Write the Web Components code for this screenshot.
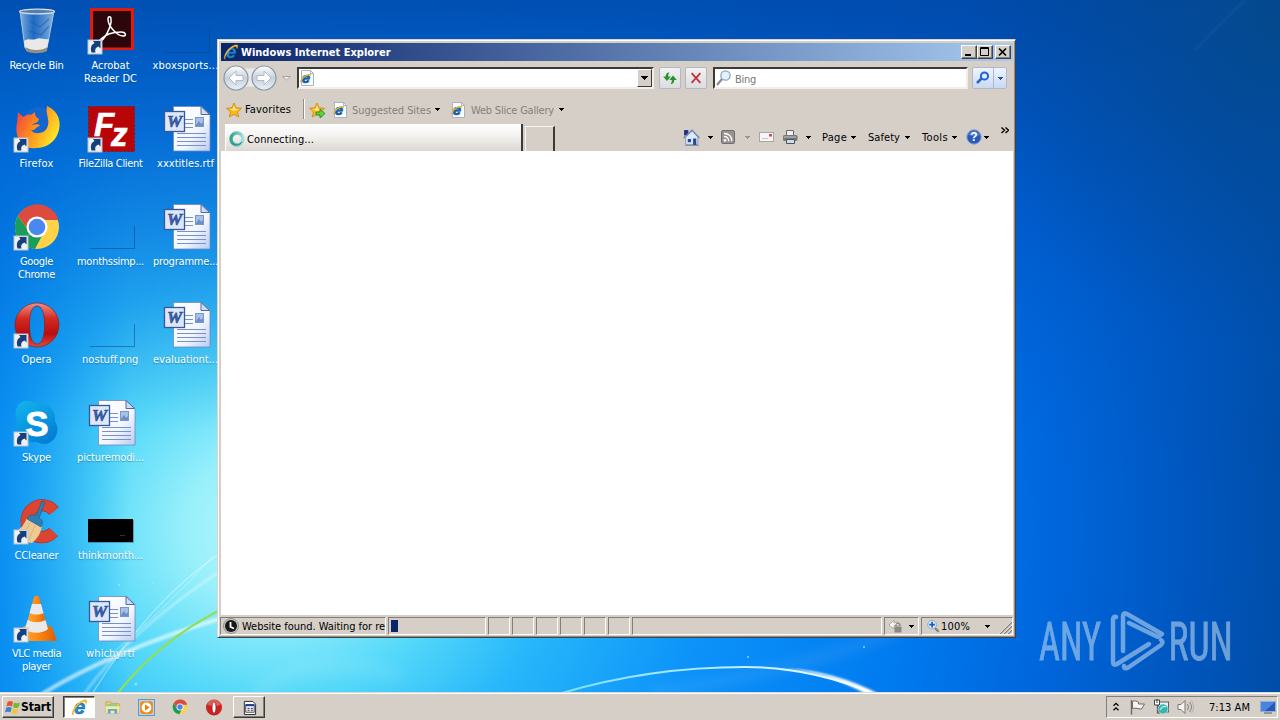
<!DOCTYPE html>
<html lang="en">
<head>
<meta charset="utf-8">
<title>Desktop</title>
<style>
  html, body { margin: 0; height: 100%; overflow: hidden; }
  body {
    font: 11px/13px "DejaVu Sans Condensed", "DejaVu Sans", "Liberation Sans", sans-serif;
    font-stretch: condensed;
    --face: #d5cfc8;
    --shade: #827e79;
    --dark: #3c3a38;
  }
</style>
</head>
<body>
<desk-top></desk-top>

<script>
const ARROW = `<rect x="2" y="33" width="14" height="14" fill="#eef1f5" stroke="#b9c2cc"/>
  <path d="M5.500 45.500c-1.500-5 0-8 3-9.500l-1.500-2 7.500 0v7.500l-2-2c-3 1-4 3-3 6z" fill="#173f7c"/>`;

const E_LOGO = `<text x="8" y="14" text-anchor="middle" font-family="Liberation Sans" font-weight="bold" font-style="italic" font-size="19" fill="#1f8fd8" stroke="#12569f" stroke-width=".5">e</text>
  <path d="M2 15.500C-1 13 5 3 12 1c4-1 3 2 2 4c0-2-1-3-3-2C6 5 2 11 2 15.500z" fill="#f5c52d" stroke="#d09a10" stroke-width=".3"/>`;

const PAGE_E = `<path d="M2.500 .5h9l3 3v12h-12z" fill="#fff" stroke="#a9b2bf"/><path d="M11.500 .5v3h3" fill="none" stroke="#a9b2bf"/>
  <text x="6.800" y="12.500" text-anchor="middle" font-family="Liberation Sans" font-weight="bold" font-style="italic" font-size="15" fill="#1668b8" stroke="#12509a" stroke-width=".7">e</text>
  <path d="M1.500 13C0 10 5 4 11 4c2 0 1 1 1 2C8 4 3 9 1.500 13z" fill="#d9bb35"/>`;

const CHROME = `<circle cx="24" cy="24" r="22" fill="#ffd24a"/>
  <path d="M5 13A22 22 0 0 1 45.500 17H24l-8 11z" fill="#dd4b3e"/>
  <path d="M5 13A22 22 0 0 0 22 46l9.500-18-7 6-8-5z" fill="#1a9d58"/>
  <circle cx="24" cy="24" r="10.500" fill="#fff"/><circle cx="24" cy="24" r="8.300" fill="#4a87f0"/>`;

const OPERA = `<defs><linearGradient id="o" x2="0" y2="1"><stop offset="0" stop-color="#f09086"/><stop offset=".35" stop-color="#d42a22"/><stop offset=".7" stop-color="#b80d0d"/><stop offset="1" stop-color="#e14a3c"/></linearGradient></defs>
  <path fill-rule="evenodd" fill="url(#o)" stroke="#8d1512" stroke-width=".6" d="M25 2a22 22 0 0 1 0 44a22 22 0 0 1 0-44zM25 5c-5 0-7.500 7-7.500 19S20 43 25 43s7.500-7 7.500-19S30 5 25 5z"/>`;

const STAR = `<path d="M8 1l2.200 4.800 5.300.5-4 3.600 1.300 5.100L8 12.300 3.200 15l1.300-5.100-4-3.600 5.300-.5z" fill="#f9b91f" stroke="#d48208" stroke-width=".8"/><path d="M8 3l1.300 4 3.700.2-5 1.800-4-1.800 2.700-.2z" fill="#ffe985"/>`;

// every entry is [viewBox, markup]
const ICONS = {
  bin: ["0 0 49 48", `<defs><linearGradient id="g"><stop offset="0" stop-color="#9fc3e4" stop-opacity=".85"/><stop offset=".4" stop-color="#3f83cc" stop-opacity=".5"/><stop offset="1" stop-color="#a6c8e6" stop-opacity=".85"/></linearGradient></defs>
    <path d="M8 4l5 37c5 4 18 4 22 0l7-37z" fill="url(#g)" stroke="#a9c5df"/>
    <path d="M12 34c5-4 8 0 12-2s8 1 13 0l-2 9c-5 4-17 4-22 0z" fill="#e9eae8"/>
    <ellipse cx="25" cy="4.500" rx="17.500" ry="2.300" fill="#547fae" stroke="#d5dce2" stroke-width="1.300"/>
    <path d="M13.500 40c5 4 17 4 22 0l-.5 4c-5 3-16 3-21 0z" fill="#938e84"/><path d="M18 14l10 6 9-8M17 24l12 4 8-9" stroke="#255faa" stroke-width="1.400" opacity=".6" fill="none"/>`],
  acrobat: ["0 0 49 48", `<rect x="4" y="1" width="44" height="42" fill="#e4190f"/><rect x="7" y="4" width="38" height="36.500" fill="#2b070b"/>
    <path d="M14 34c4 0 12-15 11-22c0-3-3-3-3 0c0 8 10 17 15 17c4 0 3-4-2-4c-8 0-16 3-20 7c-2 2-2 3-1 2z" fill="none" stroke="#fff" stroke-width="1.500"/>` + ARROW],
  firefox: ["0 0 49 48", `<defs><linearGradient id="f" x1="0" x2="1" y2=".5"><stop offset="0" stop-color="#ef3550"/><stop offset=".5" stop-color="#ff8a1c"/><stop offset="1" stop-color="#ffe226"/></linearGradient></defs>
    <circle cx="27" cy="18" r="16" fill="#1565cf"/>
    <path d="M6 7l5 5c3-2 6-3 8-2l4-3c0 4 1 5 4 7c-1 4-5 4-7 6c3 0 6-2 8 1c-4 0-4 5-9 4c3 5 13 4 16-2c4-8-2-13 0-22c12 5 15 17 11 27c-3 9-12 15-22 15C10 45 2 32 5 18z" fill="url(#f)"/>` + ARROW],
  filezilla: ["0 0 49 48", `<rect x="2.500" y="1.500" width="46" height="45" fill="#b70508" stroke="#8a1118" stroke-dasharray="2 2"/>
    <text x="8 25" y="31 41" font-family="Liberation Sans" font-weight="bold" font-style="italic" font-size="33" fill="#fff" stroke="#fff" stroke-width=".6">Fz</text>` + ARROW],
  chrome: ["0 0 49 48", `<g transform="translate(1 0)">${CHROME}</g>` + ARROW],
  opera: ["0 0 49 48", OPERA + ARROW],
  skype: ["0 0 49 48", `<defs><linearGradient id="s" x2=".6" y2="1"><stop offset="0" stop-color="#13b5ef"/><stop offset="1" stop-color="#0380d5"/></linearGradient></defs>
    <path d="M5 8C9 0 19 1 23 4c12-2 22 8 20 18c6 10 0 22-10 23c-4 0-6-1-8-2C13 45 3 35 5 22C3 17 3 12 5 8z" fill="url(#s)"/>
    <text x="25" y="36.500" text-anchor="middle" font-family="Liberation Sans" font-weight="bold" font-size="35" fill="#fff" stroke="#fff" stroke-width=".8">S</text>` + ARROW],
  ccleaner: ["0 0 49 48", `<path d="M42 14A15.500 16 0 1 0 41.500 35" fill="none" stroke="#a92d22" stroke-width="12"/><path d="M42 14A15.500 16 0 1 0 41.500 35" fill="none" stroke="#da4430" stroke-width="11"/>
    <path d="M15 21l15 8c-1 7-5 13-10 17C12 45 4 40 2 35c6-2 10-7 13-14z" fill="#efc993"/><path d="M18 26l-7 13M23 28l-6 15" stroke="#dcb27a"/>
    <path d="M30 4l3 1-6 16c4 2 4 5 2 9l-14-8c2-4 5-5 9-3z" fill="#2d7eb4" stroke="#24587e" stroke-width=".6"/>` + ARROW],
  vlc: ["0 0 49 48", `<defs><linearGradient id="v"><stop offset="0" stop-color="#ffad45"/><stop offset=".5" stop-color="#ff8b12"/><stop offset="1" stop-color="#db5c05"/></linearGradient></defs>
    <path d="M11 32l4-2h20l5 2 5 14H5z" fill="url(#v)"/><path d="M22 2q2.500-2.500 5 0l9 33c-5 5-18 5-23 0z" fill="url(#v)"/>
    <path d="M20 9h9l2.500 9c-4 2-10 2-14 0zM15.500 25c6 3 12 3 18 0l2.500 9c-5 5-18 5-23 0z" fill="#e9e9ea"/>` + ARROW],
  word: ["0 0 49 48", `<defs><linearGradient id="p" x2="1" y2="1"><stop offset="0" stop-color="#fff"/><stop offset=".6" stop-color="#f2f6ff"/><stop offset="1" stop-color="#b9cbf0"/></linearGradient></defs>
    <path d="M12.500 1.500h28l8.500 8v36.500H12.500z" fill="url(#p)" stroke="#7089bd" stroke-width=".8"/><path d="M40 1.500v8h8.500z" fill="#cfdcf5" stroke="#50699f"/>
    <path d="M24 14.500h8M24 18.500h8M24 22.500h8M16 28.500h29M16 32.500h29M16 36.500h29M16 40.500h29" stroke="#7991c4" stroke-width="1"/>
    <rect x="34.500" y="12.500" width="8" height="9" fill="#a8bfe6" stroke="#7a96cc"/><path d="M35 20l3-4 2 3 2-2v4h-7z" fill="#6c8dc9"/>
    <rect x="3.500" y="6.500" width="20" height="20" fill="#dde7f8" stroke="#38589b" stroke-width="1.300"/>
    <text x="13.500" y="22" text-anchor="middle" font-family="Liberation Serif" font-weight="bold" font-style="italic" font-size="17" fill="#3f60aa" stroke="#274a94" stroke-width=".6">W</text>`],
  thumb: ["0 0 49 48", `<path d="M4 45.500h44.500V23" fill="none" stroke="#053f86" stroke-opacity=".5"/>`],
  black: ["0 0 49 48", `<rect x="2" y="22" width="45" height="23" fill="#000"/><path d="M2 45.500h45.500V23" fill="none" stroke="#246" opacity=".4"/><path d="M34 38.500h5" stroke="#243f1c"/>`],

  ie: ["0 0 16 16", E_LOGO],
  page: ["0 0 16 16", PAGE_E],
  star: ["0 0 16 16", STAR],
  staradd: ["0 0 16 16", STAR + `<path d="M7 10h4V7l5 4.500-5 4.500v-3H7z" fill="#5fd046" stroke="#198a18" stroke-width=".8"/>`],
  refresh: ["0 0 16 16", `<path d="M7.500 2.500C4.500 2.500 3.800 4.500 3.800 6.500H1.200l3.800 4.500L8.800 6.500H6.200c0-2 .3-3 1.300-4zM8.500 14c3 0 3.700-2 3.700-4h2.600L11 5.500 7.200 10h2.600c0 2-.3 3-1.300 4z" fill="#23962c"/>`],
  stop: ["0 0 16 16", `<path d="M3 2.500l10 11M13 2.500L3 13.500" stroke="#c22f38" stroke-width="2"/>`],
  lens: ["0 0 16 16", `<path d="M1 15l5-6" stroke="#8c8c90" stroke-width="2.200"/><circle cx="9.500" cy="5.500" r="4.700" fill="#e3f1fa" stroke="#8fa3b7" stroke-width="1.200"/>`],
  lensblue: ["0 0 16 16", `<path d="M2 13l5-5" stroke="#2c67c4" stroke-width="2.500"/><circle cx="9.500" cy="6" r="3.600" fill="#dcecff" stroke="#2463d0" stroke-width="2"/>`],
  home: ["0 0 16 16", `<path d="M1 1h4v5H1z" fill="#262e8c"/><path d="M2.500 7.500L8.500 2l5.500 5.500v7H2.500z" fill="#dbe8fa" stroke="#8390bd" stroke-width=".8"/><path d="M.5 8.500l8-7.500 7 7.500" fill="none" stroke="#7883ad" stroke-width="1.200"/><path d="M9.500 9h3v6h-3zM4.500 9.500h3v3h-3z" fill="#294799"/><path d="M2 15.500h13" stroke="#8d93a4"/>`],
  rss: ["0 0 16 16", `<rect x="1.500" y="1.500" width="13" height="13" rx="1.500" fill="#969492" stroke="#706e6c"/><circle cx="5" cy="11.300" r="1.400" fill="#fff"/><path d="M4 7.500c3 0 4.700 1.700 4.700 4.800M4 4.500c5 0 7.800 2.800 7.800 7.800" fill="none" stroke="#fff" stroke-width="1.300"/>`],
  mail: ["0 0 16 16", `<rect x="1.500" y="3.500" width="14" height="9" fill="#f7f5f5" stroke="#aaa5a4"/><rect x="11" y="5" width="3" height="2.500" fill="#d94a48"/><path d="M4 9.500h6" stroke="#c9c4c4"/>`],
  print: ["0 0 16 16", `<path d="M4.500 1.500h7v5h-7z" fill="#eee" stroke="#6b6b6b"/><rect x="1" y="6" width="14.500" height="6" rx="1.500" fill="#77787b"/><path d="M2 8h12" stroke="#c6c7c9"/><path d="M4.500 10.500h8v4h-8z" fill="#bfe0f2" stroke="#555"/>`],
  help: ["0 0 16 16", `<circle cx="8" cy="8" r="7.200" fill="#2b59b8" stroke="#8ba4d4"/><path d="M2 6a6.500 6 0 0 1 12 0q-6 2-12 0z" fill="#6d94df" opacity=".6"/><text x="8" y="12.300" text-anchor="middle" font-family="Liberation Sans" font-size="12" font-weight="bold" fill="#fff">?</text>`],
  ring: ["0 0 16 16", `<defs><linearGradient id="r"><stop offset="0" stop-color="#35a58f"/><stop offset="1" stop-color="#a6dfe2"/></linearGradient></defs><circle cx="8" cy="8" r="6" fill="none" stroke="url(#r)" stroke-width="3.400"/><path d="M3 12a6.500 6.500 0 0 0 10-1" stroke="#1f8b86" stroke-width="1" fill="none"/>`],
  clock: ["0 0 16 16", `<circle cx="8" cy="8" r="7.600" fill="#c4c1bd" stroke="#8c8986" stroke-width=".8"/><circle cx="8" cy="8" r="6" fill="#16181a"/><path d="M7.500 4v5l3.500 1.500" stroke="#fff" stroke-width="1.800" fill="none"/>`],
  lock: ["0 0 16 16", `<path d="M1 7l5-5v3c3-2 5 0 5 2l-3 1c-1-1-2-1-2 0v3z" fill="#f7f7f7" stroke="#98938e" stroke-width=".7"/><rect x="6.500" y="8.500" width="7" height="6" fill="#8b8884"/><path d="M8 8V6.500q2-3 4 0V8" fill="none" stroke="#8b8884" stroke-width="1.300"/>`],
  zoom: ["0 0 16 16", `<path d="M9.500 9.500l4 4" stroke="#8b7b66" stroke-width="2.200"/><circle cx="6.500" cy="6" r="4.600" fill="#dceefa" stroke="#7fa7cc"/><path d="M6.500 3v6M3.500 6h6" stroke="#1d58c0" stroke-width="1.800"/>`],
  flagwin: ["0 0 16 16", `<path d="M2.500 3q3-2 5.500 0L7 7.500Q4 6 1.500 7.500z" fill="#e8552c"/><path d="M9 3.500q3 1.500 6 0l-1.300 4.800q-3 1.500-5.700 0z" fill="#73b938"/><path d="M1.200 8.800q3-1.500 5.500 0L5.500 13.300Q3 12 0 13.300z" fill="#3b82d2"/><path d="M7.700 9.500q3 1.500 5.700 0L12 14q-3 1.500-5.500 0z" fill="#f7c52c"/>`],
  folder: ["0 0 18 16", `<path d="M2 2.500h5l1 2h8v9H2z" fill="#f2d77b" stroke="#b99a48" stroke-width=".8"/><path d="M3 4.500h11v3H3z" fill="#8fd08a"/><path d="M1 7h16l-1 8H2z" fill="#fbe9a6" stroke="#d3b868" stroke-width=".6"/><path d="M4 15v-5h10v5h-3v-3H7v3z" fill="#5aa9da"/>`],
  media: ["0 0 16 16", `<rect x=".5" y=".5" width="15" height="15" fill="#b9daef" stroke="#5a9bc8"/><rect x="2" y="2" width="12" height="12" rx="2" fill="#f38b16"/><circle cx="8" cy="8" r="4.600" fill="#fff"/><path d="M6.500 5l4.500 3-4.500 3z" fill="#ee7f10"/>`],
  chromesm: ["0 0 48 48", CHROME],
  operasm: ["0 0 50 48", `<circle cx="25" cy="24" r="22" fill="#cf211f" stroke="#8f1a18"/><path d="M6 16a20 20 0 0 1 38 0q-18 7-38 0z" fill="#e9766d" opacity=".7"/><ellipse cx="25" cy="24" rx="5.500" ry="16" fill="#fff" stroke="#8f1a18" stroke-width="2"/>`],
  doc: ["0 0 16 16", `<path d="M2.500 1.500h9l3 3v11h-12z" fill="#fff" stroke="#222"/><rect x="4" y="5" width="9" height="8" fill="#e5e8f4" stroke="#223" stroke-width=".8"/><path d="M4 5.500h9" stroke="#163a9c" stroke-width="2"/><path d="M6 9h2M9.500 9h2M6 11h2M9.500 11h2" stroke="#333"/>`],
  flag: ["0 0 16 16", `<path d="M2.500 1v14.500" stroke="#6c6967" stroke-width="1.400"/><path d="M3.500 2.500c3-1.500 4 0 6 .5v2h6l-3 5c-4 0-5-1.500-9-.5z" fill="#f5f4f2" stroke="#6c6967"/>`],
  net: ["0 0 16 16", `<path d="M4.500 5v9H7" stroke="#555" stroke-width="1.200" fill="none"/><rect x="5.500" y="3" width="10" height="10" fill="#f1f1f1" stroke="#5b6167"/><path d="M1.500 1h5v5h-5z" fill="#fff" stroke="#444"/><path d="M4 0v4" stroke="#444"/><circle cx="10" cy="10" r="5" fill="#37b5ad" stroke="#cdeeea" stroke-width=".6"/><path d="M7 11q3-5 6-3" stroke="#c0f0e5" fill="none" stroke-width="1.300"/>`],
  sound: ["0 0 17 16", `<path d="M1 5.500h3l4-4v13l-4-4H1z" fill="#f7f6f5" stroke="#777"/><path d="M10.500 5q2 3 0 6M12.500 3q4 5 0 10" fill="none" stroke="#84817f"/><path d="M14.500 1.500q4 6.500 0 13" fill="none" stroke="#b4b0ad"/>`],
  screen: ["0 0 16 16", `<rect x=".5" y="2.500" width="15" height="10" fill="#2558b8" stroke="#8faed8"/><path d="M1 3h14L5 12H1z" fill="#4b84dd"/><path d="M4 14h8" stroke="#555b66"/>`],
};

class UiIcon extends HTMLElement {
  constructor() {
    super();
    this.attachShadow({ mode: "open" });
  }

  connectedCallback() {
    const [box, body] = ICONS[this.getAttribute("name")];
    const w = this.getAttribute("w") || 16;
    const h = this.getAttribute("h") || w;
    this.shadowRoot.innerHTML = `
      <style>:host { display: block; flex: none; text-shadow: none; } svg { display: block; overflow: visible; }</style>
      <svg viewBox="${box}" width="${w}" height="${h}">${body}</svg>`;
  }
}
customElements.define("ui-icon", UiIcon);

// One line of text, tracked so that it fills the width in "w"
class UiText extends HTMLElement {
  constructor() {
    super();
    this.attachShadow({ mode: "open" });
    this.shadowRoot.innerHTML = `
      <style>:host { display: block; flex: none; white-space: nowrap; } span { display: inline-block; }</style>
      <span><slot></slot></span>`;
  }

  connectedCallback() {
    const w = Number(this.getAttribute("w"));
    if (!w) return;
    const span = this.shadowRoot.querySelector("span");
    const gap = (w - span.getBoundingClientRect().width) / this.textContent.length;
    span.style.letterSpacing = gap + "px";
    this.style.width = w + "px";
  }
}
customElements.define("ui-text", UiText);

class DropArrow extends HTMLElement {
  constructor() {
    super();
    this.attachShadow({ mode: "open" });
    this.shadowRoot.innerHTML = `
      <style>
        :host { display: block; flex: none; width: 5px; height: 3px; color: #000; }
        svg { display: block; }
      </style>
      <svg width="5" height="3" shape-rendering="crispEdges"><path d="M0 0h5v1h-5zM1 1h3v1h-3zM2 2h1v1h-1z" fill="currentColor"/></svg>`;
  }
}
customElements.define("drop-arrow", DropArrow);

class DesktopIcon extends HTMLElement {
  constructor() {
    super();
    this.attachShadow({ mode: "open" });
  }

  connectedCallback() {
    // label="text:width|text:width"
    const lines = this.getAttribute("label").split("|").map((line) => {
      const [text, w] = line.split(":");
      return `<ui-text w="${w}">${text}</ui-text>`;
    });
    this.shadowRoot.innerHTML = `
      <style>
        :host { display: flex; flex-direction: column; align-items: center; height: 98px; color: #fff; text-shadow: 0 1px 1px #04589088; }
        .label { display: flex; flex-direction: column; align-items: center; margin-top: 4px; }
      </style>
      <ui-icon name="${this.getAttribute("icon")}" w="49" h="48"></ui-icon>
      <div class="label">${lines.join("")}</div>`;
  }
}
customElements.define("desktop-icon", DesktopIcon);

class WallPaper extends HTMLElement {
  constructor() {
    super();
    this.attachShadow({ mode: "open" });
    this.shadowRoot.innerHTML = `
      <style>:host { display: block; } svg { display: block; }</style>
      <svg width="1280" height="720">
        <defs>
          <radialGradient id="glow" gradientUnits="userSpaceOnUse" cx="0" cy="0" r="1060" gradientTransform="translate(270 530) scale(1 .92)">
            <stop offset="0" stop-color="#b9f6fb"/><stop offset=".08" stop-color="#98f0fb"/><stop offset=".17" stop-color="#56d9f9"/>
            <stop offset=".27" stop-color="#27b7fa"/><stop offset=".42" stop-color="#0c92f9"/><stop offset=".6" stop-color="#007bf0"/>
            <stop offset=".74" stop-color="#0066dc"/><stop offset=".88" stop-color="#0055bc"/><stop offset="1" stop-color="#004a9f"/>
          </radialGradient>
          <linearGradient id="top" x2="0" y2="1"><stop offset="0" stop-color="#0049aa" stop-opacity=".88"/><stop offset=".22" stop-color="#0050bb" stop-opacity=".5"/><stop offset=".6" stop-color="#0060d0" stop-opacity="0"/></linearGradient>
          <linearGradient id="left"><stop offset="0" stop-color="#0080ee" stop-opacity=".75"/><stop offset="1" stop-color="#0090f0" stop-opacity="0"/></linearGradient>
          <linearGradient id="arc"><stop offset="0" stop-color="#7fe0ff"/><stop offset=".5" stop-color="#b8ecff"/><stop offset="1" stop-color="#fff"/></linearGradient>
          <radialGradient id="corner" gradientUnits="userSpaceOnUse" cx="1290" cy="20" r="330"><stop offset="0" stop-color="#064980" stop-opacity=".7"/><stop offset="1" stop-color="#064a90" stop-opacity="0"/></radialGradient>
          <filter id="soft"><feGaussianBlur stdDeviation="1.300"/></filter>
          <filter id="haze" filterUnits="userSpaceOnUse" x="0" y="0" width="1280" height="720"><feGaussianBlur stdDeviation="6"/></filter>
        </defs>
        <rect width="1280" height="720" fill="url(#glow)"/>
        <rect width="130" height="720" fill="url(#left)"/>
        <rect width="1280" height="720" fill="url(#top)"/>
        <rect x="950" width="330" height="360" fill="url(#corner)"/>
        <g fill="none" stroke="#fff">
          <path d="M42 694Q110 652 222 618" stroke-width="4" opacity=".6" filter="url(#soft)"/>
          <path d="M84 694Q130 630 222 570" stroke-width="2.500" opacity=".4" filter="url(#soft)"/>
          <path d="M92 694Q150 600 222 552" stroke-width="1.500" opacity=".35"/>
          <path d="M104 660Q165 610 213 556" stroke-width="1" opacity=".35"/>
          <path d="M117 694Q160 640 222 609" stroke="#8fe058" stroke-width="2.300"/>
          <path d="M255 694Q300 650 400 675" stroke-width="16" opacity=".07" filter="url(#haze)"/>
          <path d="M650 694Q800 670 900 630" stroke-width="9" opacity=".09" filter="url(#haze)"/>
          <path d="M1195 50L1245 0" stroke-width="2" opacity=".05" filter="url(#soft)"/>
        </g>
        <path d="M790 669Q834 671 879 694h-13Q825 671 780 669z" fill="#fff" filter="url(#soft)"/>
        <path d="M562 693Q650 667 745 667Q810 667 872 693" fill="none" stroke="url(#arc)" stroke-width="2"/>
        <g fill="#9eeaff" opacity=".8"><circle cx="119" cy="585" r="1"/><circle cx="153" cy="583" r="1"/><circle cx="136" cy="684" r="1.500"/><circle cx="748" cy="657" r="1"/><circle cx="864" cy="647" r="1"/></g>
      </svg>`;
  }
}
customElements.define("wall-paper", WallPaper);

class WaterMark extends HTMLElement {
  constructor() {
    super();
    this.attachShadow({ mode: "open" });
    this.shadowRoot.innerHTML = `
      <style>:host { display: block; } svg { display: block; }</style>
      <svg width="196" height="66" opacity=".62">
        <g fill="#b0d0ee" stroke="#b0d0ee" stroke-width=".8" font-family="Roboto" font-size="53" font-weight="400">
          <text transform="translate(1 52) scale(.62 1)" textLength="100" lengthAdjust="spacingAndGlyphs">ANY</text>
          <text transform="translate(130.500 52) scale(.6 1)" textLength="107" lengthAdjust="spacingAndGlyphs">RUN</text>
        </g>
        <g fill="none" stroke="#b0d0ee" stroke-width="4.500" stroke-linejoin="round" stroke-linecap="round">
          <path d="M78 9Q75 8 75 12V54Q75 58 79 56L111 36"/>
          <path d="M85 43V8Q85 4 89 6L124 26L120 29L91 15"/>
          <path d="M123 32Q126 34 123 37L91 59Q86 62 86 58"/>
        </g>
      </svg>`;
  }
}
customElements.define("water-mark", WaterMark);

class TitleBar extends HTMLElement {
  constructor() {
    super();
    this.attachShadow({ mode: "open" });
    this.shadowRoot.innerHTML = `
      <style>
        :host { display: flex; align-items: center; height: 18px; padding: 0 2px 0 2px; background: linear-gradient(90deg, #0a246a, #a6caf0); color: #fff; font-weight: bold; }
        ui-text { margin: 0 auto 0 2px; }
        .btn { box-sizing: border-box; width: 16px; height: 14px; background: var(--face); border: 1px solid; border-color: #fff #45423f #45423f #fff; box-shadow: inset -1px -1px var(--shade); }
        .btn:last-child { margin-left: 2px; }
        svg { display: block; }
      </style>
      <ui-icon name="ie"></ui-icon>
      <ui-text w="152"><slot></slot></ui-text>
      <div class="btn"><svg width="13" height="12"><path d="M3 9h6" stroke="#000" stroke-width="2"/></svg></div>
      <div class="btn"><svg width="13" height="12"><path d="M2.500 1.500h8v8h-8zM2 2.500h9" fill="none" stroke="#000"/></svg></div>
      <div class="btn"><svg width="13" height="12"><path d="M3 2.500l7 7M10 2.500l-7 7" stroke="#000" stroke-width="1.700"/></svg></div>`;
  }
}
customElements.define("title-bar", TitleBar);

class NavBar extends HTMLElement {
  constructor() {
    super();
    this.attachShadow({ mode: "open" });
    this.shadowRoot.innerHTML = `
      <style>
        :host { display: flex; align-items: center; height: 34px; padding-left: 3px; box-sizing: border-box; }
        .nav { display: block; flex: none; margin-right: 3px; }
        .field { box-sizing: border-box; display: flex; align-items: center; height: 22px; background: #fff; border: 2px solid; border-color: var(--dark) #f1eeea #f1eeea var(--dark); }
        .url { width: 357px; margin-left: 6px; }
        .url .drop { margin-left: auto; display: flex; align-items: center; justify-content: center; width: 15px; height: 18px; box-sizing: border-box; background: var(--face); border: 1px solid; border-color: #fff var(--dark) var(--dark) #fff; }
        .sq { box-sizing: border-box; display: flex; align-items: center; justify-content: center; width: 22px; height: 22px; border: 1px solid #b3b9c4; border-radius: 2px; background: linear-gradient(#f1f1f2, #dddde0); }
        .search { width: 255px; margin-left: 6px; padding-left: 1px; color: #777; }
        .search ui-text { margin: 2px 0 0 3px; }
        .go { width: 35px; margin-left: 4px; justify-content: flex-start; padding-left: 2px; background: linear-gradient(#eef4fd, #c9d9f2); }
        .go i { width: 1px; height: 20px; background: #aab9d2; margin: 0 4px 0 2px; }
        .sm { color: #2c4f9c; }
      </style>
      <svg class="nav" width="56" height="28">
        <defs><linearGradient id="b" x2="0" y2="1"><stop offset="0" stop-color="#fff"/><stop offset=".5" stop-color="#c6d0dc"/><stop offset="1" stop-color="#e8f3fb"/></linearGradient></defs>
        <path d="M12 2Q27 7 42 2V25Q27 20 12 25z" fill="#ebe9e7"/>
        <g fill="url(#b)" stroke="#8d98a6" stroke-width="1.200"><circle cx="13" cy="14" r="12"/><circle cx="41" cy="14" r="12"/></g>
        <path d="M13 7L6 14l7 7v-4.500h7v-5h-7zM41 7l7 7-7 7v-4.500h-7v-5h7z" fill="#fff" stroke="#b0bac6"/>
      </svg>
      <svg width="9" height="5"><path d="M.5 .5h8L4.500 4z" fill="#eee" stroke="#aaa59f"/></svg>
      <div class="field url"><ui-icon name="page"></ui-icon><div class="drop"><svg width="7" height="4" shape-rendering="crispEdges"><path d="M0 0h7v1h-7zM1 1h5v1h-5zM2 2h3v1h-3zM3 3h1v1h-1z"/></svg></div></div>
      <div class="sq" style="margin-left:5px"><ui-icon name="refresh"></ui-icon></div>
      <div class="sq" style="margin-left:4px"><ui-icon name="stop" w="14"></ui-icon></div>
      <div class="field search"><ui-icon name="lens"></ui-icon><ui-text w="21">Bing</ui-text></div>
      <div class="sq go"><ui-icon name="lensblue"></ui-icon><i></i><drop-arrow class="sm"></drop-arrow></div>`;
  }
}
customElements.define("nav-bar", NavBar);

class FavoritesBar extends HTMLElement {
  constructor() {
    super();
    this.attachShadow({ mode: "open" });
    this.shadowRoot.innerHTML = `
      <style>
        :host { display: flex; align-items: center; box-sizing: border-box; height: 27px; padding: 2px 0 0 6px; color: #85817d; }
        .first { color: #000; margin-left: 3px; }
        i { width: 1px; height: 20px; margin: -2px 4px 0 12px; background: #918d88; border-right: 1px solid #fff; }
        .link { margin: 1px 4px 0 4px; }
        .gap { margin-right: 10px; }
      </style>
      <ui-icon name="star"></ui-icon><ui-text class="first" w="46">Favorites</ui-text><i></i>
      <ui-icon name="staradd" style="margin-right:7px"></ui-icon>
      <ui-icon name="page"></ui-icon><ui-text class="link" w="79">Suggested Sites</ui-text><drop-arrow class="gap"></drop-arrow>
      <ui-icon name="page"></ui-icon><ui-text class="link" w="83" style="margin:1px 5px 0">Web Slice Gallery</ui-text><drop-arrow></drop-arrow>`;
  }
}
customElements.define("favorites-bar", FavoritesBar);

class CommandBar extends HTMLElement {
  constructor() {
    super();
    this.attachShadow({ mode: "open" });
    this.shadowRoot.innerHTML = `
      <style>
        :host { display: flex; align-items: flex-end; height: 29px; padding-left: 5px; }
        .tab { box-sizing: border-box; display: flex; align-items: center; width: 298px; height: 27px; padding: 3px 0 0 3px; border-right: 2px solid var(--dark); border-left: 1px solid #fff; background: linear-gradient(#fff, #f5f4f2 40%, #dcd7d1); }
        .tab ui-text { margin-left: 2px; }
        .new { box-sizing: border-box; width: 30px; height: 25px; margin-left: 2px; border: 1px solid #f7f5f3; border-bottom: 0; border-right: 2px solid var(--dark); }
        .tools { display: flex; align-items: center; height: 27px; margin-left: 128px; padding-bottom: 1px; box-sizing: border-box; }
        .tools drop-arrow { margin: 0 7px 0 3px; }
        .tools ui-text + drop-arrow { margin: 0 12px 0 3px; }
        .more { display: block; margin: 0 0 17px auto; padding-right: 4px; }
      </style>
      <div class="tab"><ui-icon name="ring"></ui-icon><ui-text w="67">Connecting...</ui-text></div>
      <div class="new"></div>
      <div class="tools">
        <ui-icon name="home" w="17"></ui-icon><drop-arrow style="margin-left:8px"></drop-arrow>
        <ui-icon name="rss"></ui-icon><drop-arrow style="margin:0 11px 0 9px;color:#98938e"></drop-arrow>
        <ui-icon name="mail" style="margin-left:-3px"></ui-icon><ui-icon name="print" style="margin:0 7px 0 8px"></ui-icon><drop-arrow style="margin:0 11px 0 1px"></drop-arrow>
        <ui-text w="25">Page</ui-text><drop-arrow style="margin-left:4px"></drop-arrow>
        <ui-text w="32">Safety</ui-text><drop-arrow style="margin-left:5px"></drop-arrow>
        <ui-text w="26">Tools</ui-text><drop-arrow style="margin-right:9px;margin-left:4px"></drop-arrow>
        <ui-icon name="help"></ui-icon><drop-arrow style="margin-left:2px"></drop-arrow>
      </div>
      <svg class="more" width="8" height="7"><path d="M.5 .5l3 2.700-3 2.700M4.500 .5l3 2.700-3 2.700" fill="none" stroke="#000" stroke-width="1.400"/></svg>`;
  }
}
customElements.define("command-bar", CommandBar);

class StatusBar extends HTMLElement {
  constructor() {
    super();
    this.attachShadow({ mode: "open" });
    this.shadowRoot.innerHTML = `
      <style>
        :host { display: flex; gap: 2px; height: 18px; padding: 2px 0 1px; }
        div { box-sizing: border-box; display: flex; align-items: center; height: 18px; width: 22px; border: 1px solid; border-color: var(--shade) #fff #fff var(--shade); overflow: hidden; }
        b { display: block; width: 7px; height: 12px; margin-left: 2px; background: #0a246a; }
        .grip { margin-left: auto; align-self: flex-end; }
      </style>
      <div style="width:166px;padding-left:2px"><ui-icon name="clock"></ui-icon><ui-text w="143" style="margin-left:3px">Website found. Waiting for re</ui-text></div>
      <div style="width:98px"><b></b></div>
      <div></div><div></div><div></div><div></div><div></div><div></div>
      <div style="width:250px"></div>
      <div style="width:35px;padding-left:3px"><ui-icon name="lock"></ui-icon><drop-arrow style="margin-left:5px"></drop-arrow></div>
      <div style="width:92px;padding-left:4px"><ui-icon name="zoom" w="15"></ui-icon><ui-text w="29">100%</ui-text><drop-arrow style="margin-left:15px"></drop-arrow>
        <svg class="grip" width="13" height="13"><path d="M1 13L13 1M5 13l8-8M9 13l4-4" stroke="#827e79" stroke-width="1.400"/><path d="M0 13L13 0M4 13l9-9M8 13l5-5" stroke="#fff" stroke-width=".6"/></svg></div>`;
  }
}
customElements.define("status-bar", StatusBar);

class BrowserWindow extends HTMLElement {
  constructor() {
    super();
    this.attachShadow({ mode: "open" });
    this.shadowRoot.innerHTML = `
      <style>
        :host { box-sizing: border-box; display: flex; flex-direction: column; width: 799px; height: 599px; padding: 3px 1px 1px 2px; background: var(--face); border: 1px solid; border-color: #d9d5d0 #45423f #45423f #d9d5d0; box-shadow: inset 1px 1px #fff, inset -1px -1px #928d88; }
        .view { flex: 1; background: #fff; margin: 0 1px; }
        title-bar { margin: 0 1px; }
        nav-bar, favorites-bar, command-bar, status-bar { margin: 0 1px 0 0; }
      </style>
      <title-bar>Windows Internet Explorer</title-bar>
      <nav-bar></nav-bar>
      <favorites-bar></favorites-bar>
      <command-bar></command-bar>
      <div class="view"></div>
      <status-bar></status-bar>`;
  }
}
customElements.define("browser-window", BrowserWindow);

class TaskBar extends HTMLElement {
  constructor() {
    super();
    this.attachShadow({ mode: "open" });
    this.shadowRoot.innerHTML = `
      <style>
        :host { box-sizing: border-box; display: flex; align-items: center; height: 28px; padding: 1px 2px 0 2px; background: var(--face); border-top: 1px solid #dcd8d3; box-shadow: inset 0 1px #fff; }
        .btn { box-sizing: border-box; display: flex; align-items: center; justify-content: center; height: 22px; border: 1px solid; border-color: #fff var(--dark) var(--dark) #fff; box-shadow: inset -1px -1px var(--shade); }
        .start { width: 52px; font-weight: bold; font-size: 12px; }
        .on { width: 32px; margin-left: 9px; background: #fff; border-color: var(--dark) #fff #fff var(--dark); box-shadow: inset 1px 1px var(--shade); }
        .quick { display: flex; align-items: center; gap: 17px; margin: 0 10px 0 9px; }
        .tray { box-sizing: border-box; display: flex; align-items: center; width: 172px; height: 22px; margin-left: auto; padding-left: 6px; border: 1px solid; border-color: var(--shade) #fff #fff var(--shade); }
      </style>
      <div class="btn start"><ui-icon name="flagwin" w="16"></ui-icon><ui-text w="30">Start</ui-text></div>
      <div class="btn on"><ui-icon name="ie" w="17"></ui-icon></div>
      <div class="quick">
        <ui-icon name="folder" w="17" h="16"></ui-icon><ui-icon name="media" w="17"></ui-icon>
        <ui-icon name="chromesm" w="16"></ui-icon><ui-icon name="operasm" w="18" h="17"></ui-icon>
      </div>
      <div class="btn" style="width:32px"><ui-icon name="doc" w="15"></ui-icon></div>
      <div class="tray">
        <svg width="6" height="10"><path d="M.5 3.800L3 1.300l2.500 2.500M.5 8.300L3 5.800l2.500 2.500" fill="none" stroke="#000" stroke-width="1.300"/></svg>
        <ui-icon name="flag" style="margin-left:10px"></ui-icon>
        <ui-icon name="net" style="margin-left:8px"></ui-icon>
        <ui-icon name="sound" w="17" h="16" style="margin-left:8px"></ui-icon>
        <ui-text w="41" style="margin-left:15px">7:13 AM</ui-text>
        <ui-icon name="screen" style="margin-left:10px"></ui-icon>
      </div>`;
  }
}
customElements.define("task-bar", TaskBar);

class DeskTop extends HTMLElement {
  constructor() {
    super();
    this.attachShadow({ mode: "open" });
    this.shadowRoot.innerHTML = `
      <style>
        :host { display: grid; grid-template: 692px 28px / 1280px; width: 1280px; height: 720px; overflow: hidden; }
        wall-paper { grid-area: 1 / 1 / 3 / 2; }
        .icons { grid-area: 1 / 1; display: grid; grid-template-columns: 73px 75px 75px; align-items: start; padding-top: 7px; z-index: 1; }
        browser-window { position: absolute; left: 217px; top: 39px; z-index: 2; }
        water-mark { position: absolute; left: 1038px; top: 608px; z-index: 3; }
        task-bar { grid-area: 2 / 1; z-index: 4; }
      </style>
      <wall-paper></wall-paper>
      <div class="icons">
        <div>
          <desktop-icon icon="bin" label="Recycle Bin:54"></desktop-icon>
          <desktop-icon icon="firefox" label="Firefox:34"></desktop-icon>
          <desktop-icon icon="chrome" label="Google:33|Chrome:37"></desktop-icon>
          <desktop-icon icon="opera" label="Opera:30"></desktop-icon>
          <desktop-icon icon="skype" label="Skype:29"></desktop-icon>
          <desktop-icon icon="ccleaner" label="CCleaner:44"></desktop-icon>
          <desktop-icon icon="vlc" label="VLC media:49|player:29"></desktop-icon>
        </div>
        <div>
          <desktop-icon icon="acrobat" label="Acrobat:38|Reader DC:53"></desktop-icon>
          <desktop-icon icon="filezilla" label="FileZilla Client:64"></desktop-icon>
          <desktop-icon icon="thumb" label="monthssimp...:67"></desktop-icon>
          <desktop-icon icon="thumb" label="nostuff.png:57"></desktop-icon>
          <desktop-icon icon="word" label="picturemodi...:67"></desktop-icon>
          <desktop-icon icon="black" label="thinkmonth...:65"></desktop-icon>
          <desktop-icon icon="word" label="whichy.rtf:49"></desktop-icon>
        </div>
        <div>
          <desktop-icon icon="thumb" label="xboxsports...:66"></desktop-icon>
          <desktop-icon icon="word" label="xxxtitles.rtf:57"></desktop-icon>
          <desktop-icon icon="word" label="programme...:65"></desktop-icon>
          <desktop-icon icon="word" label="evaluationt...:65"></desktop-icon>
        </div>
      </div>
      <browser-window></browser-window>
      <water-mark></water-mark>
      <task-bar></task-bar>`;
  }
}
customElements.define("desk-top", DeskTop);
</script>
</body>
</html>
